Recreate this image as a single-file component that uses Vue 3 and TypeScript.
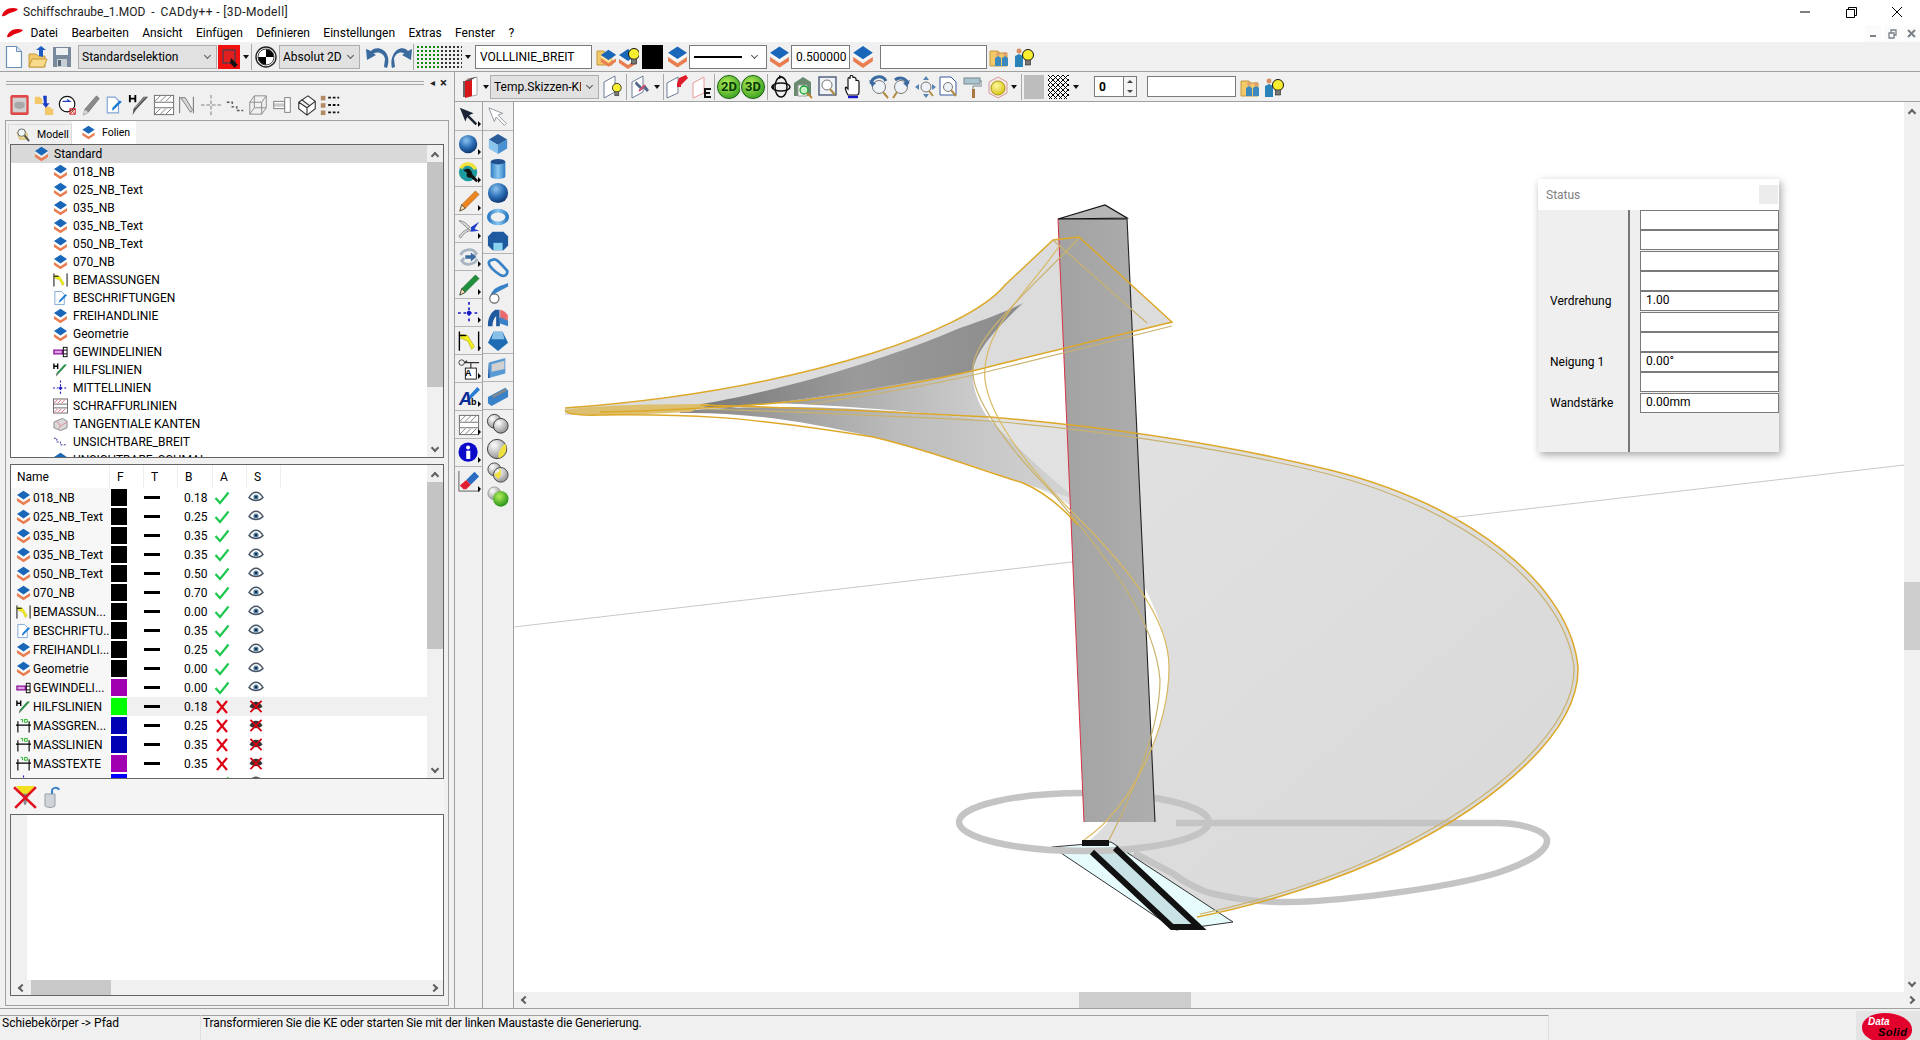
<script setup lang="ts">
type Item = { k: string; id?: string; w: number; m: number; t?: string };

const ic = (id: string, w: number, m: number): Item => ({ k: "ic", id, w, m });
const arrow = (m: number): Item => ({ k: "arrow", w: 7, m });
const sep = (m: number): Item => ({ k: "sep", w: 1, m });
const combo = (t: string, w: number, m: number): Item => ({ k: "combo", t, w, m });
const input = (t: string, w: number, m: number): Item => ({ k: "input", t, w, m });

const menu = ["Datei", "Bearbeiten", "Ansicht", "Einfügen", "Definieren", "Einstellungen", "Extras", "Fenster", "?"];

const bar1: Item[] = [
  ic("doc", 18, 5), ic("open", 20, 5), ic("save", 20, 4), combo("Standardselektion", 139, 6),
  ic("redbtn", 22, 1), arrow(3), sep(2), ic("cross", 22, 3), combo("Absolut 2D", 81, 2),
  ic("undo", 25, 5), ic("redo", 22, 1), sep(0), ic("grid", 45, 3), arrow(3),
  input("VOLLLINIE_BREIT", 117, 4), ic("flayer", 20, 4), ic("blayer", 20, 3), { k: "black", w: 21, m: 3 },
  ic("layer", 21, 4), { k: "line", w: 78, m: 1 }, ic("layer", 21, 2), input("0.500000", 59, 1),
  ic("layer", 22, 2), input("", 107, 6), ic("fperson", 21, 2), ic("pbulb", 21, 4),
];

const bar2: Item[] = [
  ic("prism", 18, 7), arrow(3), combo("Temp.Skizzen-KE", 109, 1), ic("planebulb", 20, 4), sep(3),
  ic("planetool", 20, 4), arrow(3), sep(3), ic("planered", 22, 2), ic("planee", 20, 4), sep(2),
  { k: "ball", t: "2D", w: 24, m: 2 }, { k: "ball", t: "3D", w: 24, m: 0 }, sep(2), ic("orbit", 20, 3), ic("house", 22, 2),
  ic("zoomwin", 20, 3), ic("hand", 18, 6), ic("zoomrev", 21, 6), ic("zoomfwd", 19, 3), ic("fit", 23, 3),
  ic("zoomdoc", 20, 2), ic("roller", 19, 4), ic("cube", 20, 6), arrow(3), sep(4),
  { k: "grey", w: 20, m: 2 }, ic("checker", 21, 4), arrow(4), input("0", 30, 15), { k: "spin", w: 13, m: 0 },
  input("", 89, 10), ic("fperson", 21, 4), ic("pbulb", 21, 3),
];

const leftTools: Item[] = [
  ic("redbox", 21, 9), ic("foldswap", 22, 3), ic("circ", 20, 3), ic("pencilgrey", 18, 4), ic("label", 18, 5),
  ic("helpgrey", 22, 5), ic("hatchgrey", 22, 3), ic("dimgrey", 17, 3), ic("centergrey", 22, 5),
  ic("hiddengrey", 20, 3), ic("wire", 20, 3), ic("bolt", 20, 4), ic("tanggrey", 20, 5), ic("listdots", 20, 3),
];

const tree: [string, string][] = [
  ["layer", "018_NB"], ["layer", "025_NB_Text"], ["layer", "035_NB"], ["layer", "035_NB_Text"],
  ["layer", "050_NB_Text"], ["layer", "070_NB"], ["dim", "BEMASSUNGEN"], ["label", "BESCHRIFTUNGEN"],
  ["layer", "FREIHANDLINIE"], ["layer", "Geometrie"], ["thread", "GEWINDELINIEN"], ["help", "HILFSLINIEN"],
  ["center", "MITTELLINIEN"], ["hatch", "SCHRAFFURLINIEN"], ["tang", "TANGENTIALE KANTEN"],
  ["hidden", "UNSICHTBARE_BREIT"], ["layer", "UNSICHTBARE_SCHMAL"],
];

const K = "#000";
const P = "#a000b0";
const D = "#0000b4";
const rows: { i: string; n: string; c: string; b: string; on: boolean }[] = [
  { i: "layer", n: "018_NB", c: K, b: "0.18", on: true },
  { i: "layer", n: "025_NB_Text", c: K, b: "0.25", on: true },
  { i: "layer", n: "035_NB", c: K, b: "0.35", on: true },
  { i: "layer", n: "035_NB_Text", c: K, b: "0.35", on: true },
  { i: "layer", n: "050_NB_Text", c: K, b: "0.50", on: true },
  { i: "layer", n: "070_NB", c: K, b: "0.70", on: true },
  { i: "dim", n: "BEMASSUN...", c: K, b: "0.00", on: true },
  { i: "label", n: "BESCHRIFTU...", c: K, b: "0.35", on: true },
  { i: "layer", n: "FREIHANDLI...", c: K, b: "0.25", on: true },
  { i: "layer", n: "Geometrie", c: K, b: "0.00", on: true },
  { i: "thread", n: "GEWINDELI...", c: P, b: "0.00", on: true },
  { i: "help", n: "HILFSLINIEN", c: "#00ff00", b: "0.18", on: false },
  { i: "mass", n: "MASSGREN...", c: D, b: "0.25", on: false },
  { i: "mass", n: "MASSLINIEN", c: D, b: "0.35", on: false },
  { i: "mass", n: "MASSTEXTE", c: P, b: "0.35", on: false },
  { i: "center", n: "MITTELLINIEN", c: "#0000ff", b: "0.18", on: true },
];

const vcol1 = ["v-arrow", "v-sphere", "v-wrench", "v-pencil", "v-pliers", "v-refresh", "v-green", "center", "dim", "v-text", "v-abc", "hatchgrey", "v-info", "v-eraser"];
const vcol2: { i: string; h: number; s?: boolean }[] = [
  { i: "v-arrow2", h: 28, s: true }, { i: "s-box", h: 26 }, { i: "s-cyl", h: 24 }, { i: "s-sph", h: 24 },
  { i: "s-torus", h: 24 }, { i: "s-cham", h: 25, s: true }, { i: "s-ring", h: 27 }, { i: "s-sweep", h: 24 },
  { i: "s-loft", h: 24 }, { i: "s-block", h: 25, s: true }, { i: "s-cut", h: 28, s: true }, { i: "s-slot", h: 28, s: true },
  { i: "b-union", h: 27 }, { i: "b-yellow", h: 24 }, { i: "b-inter", h: 24 }, { i: "b-green", h: 24 },
];

const statusRows = [
  { l: "", v: "" }, { l: "", v: "" }, { l: "", v: "", gap: true }, { l: "", v: "" }, { l: "Verdrehung", v: "1.00" },
  { l: "", v: "", gap: true }, { l: "", v: "" }, { l: "Neigung 1", v: "0.00°" }, { l: "", v: "" },
  { l: "Wandstärke", v: "0.00mm", gap: true },
];
</script>

<template>
  <svg class="defs" aria-hidden="true">
    <defs>
      <radialGradient id="gb" cx=".4" cy=".3" r=".75"><stop offset="0" stop-color="#8cc4f0" /><stop offset=".55" stop-color="#2a6cb4" /><stop offset="1" stop-color="#0c2f66" /></radialGradient>
      <linearGradient id="gc" x1="0" x2="1"><stop offset="0" stop-color="#2f7cc4" /><stop offset=".5" stop-color="#8cc8f0" /><stop offset="1" stop-color="#2f7cc4" /></linearGradient>
      <radialGradient id="gs" cx=".35" cy=".3" r=".8"><stop offset="0" stop-color="#fff" /><stop offset="1" stop-color="#888" /></radialGradient>
      <radialGradient id="gg" cx=".4" cy=".35" r=".7"><stop offset="0" stop-color="#b4f05a" /><stop offset="1" stop-color="#1e8c14" /></radialGradient>
      <radialGradient id="gy" cx=".4" cy=".35" r=".7"><stop offset="0" stop-color="#fff8a0" /><stop offset="1" stop-color="#d8c010" /></radialGradient>
      <pattern id="dg" width="4" height="4" patternUnits="userSpaceOnUse"><rect width="2" height="2" fill="#128a12" /></pattern>
      <pattern id="dk" width="4" height="4" patternUnits="userSpaceOnUse"><rect width="2" height="2" fill="#333" /></pattern>
      <pattern id="ch" width="5" height="5" patternUnits="userSpaceOnUse"><path d="M0 0l5 5M5 0L0 5" stroke="#000" /></pattern>
      <g id="layerinner"><path d="M1 7l9-6 9 6-9 6z" fill="#1a66b8" /><path d="M1 8l9 6 9-6v1l-9 6-9-6z" fill="#fff" /><path d="M1 11l9 6 9-6v4l-9 6-9-6z" fill="#ea7d50" /></g>
      <g id="bulbinner"><circle cx="6" cy="6" r="5.500" fill="#f8ee30" stroke="#111" /><rect x="3.500" y="11" width="5" height="5" fill="#777" stroke="#222" stroke-width=".6" /></g>
    </defs>

    <symbol id="layer" viewBox="0 0 20 22"><use href="#layerinner" /></symbol>
    <symbol id="dim" viewBox="0 0 16 16"><path d="M1 1v14M15 1v14" stroke="#000" /><path d="M2 3l5 1 5 8-2 2-3-6-5-2z" fill="#f2ee20" stroke="#a8a000" stroke-width=".4" /><path d="M1 4h5" stroke="#000" /></symbol>
    <symbol id="label" viewBox="0 0 16 16"><path d="M2 1h7l3 3v11H2z" fill="#fff" stroke="#7ea4d4" /><path d="M15 5l-7 7-2 1 1-3 6-6z" fill="#1c7cd4" /></symbol>
    <symbol id="thread" viewBox="0 0 16 16"><path d="M1 6h9v4H1z" fill="#e0a0e8" stroke="#8a1098" stroke-width="1.4" /><rect x="11" y="3" width="4" height="10" fill="#fff" stroke="#000" /><path d="M11 6h4M11 10h4" stroke="#000" /></symbol>
    <symbol id="help" viewBox="0 0 16 16"><path d="M1 1v6M5 1v6M1 4h4" stroke="#000" stroke-width="1.5" /><path d="M15 2l-9 10-3 3 1-4 8-9z" fill="#2f8f4c" /><path d="M3 15l1-4 2 1z" fill="#888" /></symbol>
    <symbol id="center" viewBox="0 0 16 16"><path d="M8 0v16M0 8h16" stroke="#1818c8" stroke-width="1.2" stroke-dasharray="2 2" /><circle cx="8" cy="8" r="1.6" fill="#1818c8" /></symbol>
    <symbol id="hatch" viewBox="0 0 16 16"><rect x=".5" y=".5" width="15" height="15" fill="#fff" stroke="#666" /><path d="M1 6h14M1 10h14" stroke="#666" /><path d="M1 5l4-4M5 5l4-4M9 5l4-4M1 15l4-4M5 15l4-4M9 15l4-4" stroke="#e0607c" /></symbol>
    <symbol id="tang" viewBox="0 0 16 16"><path d="M1 6l9-4 5 3v7l-7 3-7-3z" fill="#d8d8d8" stroke="#888" /><path d="M4 5l4 5-2 3M8 10l7-4" fill="none" stroke="#e08a90" /></symbol>
    <symbol id="hidden" viewBox="0 0 16 16"><path d="M1 4h3v4h4v3h7" fill="none" stroke="#20208a" stroke-dasharray="2 1.5" /></symbol>
    <symbol id="mass" viewBox="0 0 16 16"><path d="M2 3v12M14 3v12M0 7h16" stroke="#000" stroke-width="1.2" /><path d="M5 1h2v3M9 1h3v3H9z" fill="none" stroke="#22b020" /></symbol>

    <symbol id="doc" viewBox="0 0 18 24"><path d="M1.500 1.500h10l5 5v16h-15z" fill="#fff" stroke="#6a90b8" stroke-width="1.200" /><path d="M11.500 1.500v5h5" fill="#dde6f0" stroke="#6a90b8" /></symbol>
    <symbol id="open" viewBox="0 0 20 24"><path d="M1 9h7l2 2h7v11H1z" fill="#f2c868" stroke="#c49a40" /><path d="M1 22l3-8h15l-3 8z" fill="#f8dc8c" stroke="#c49a40" /><path d="M11 11V5H8l5-4 5 4h-3v7z" fill="#1c5cc4" /></symbol>
    <symbol id="save" viewBox="0 0 20 22"><path d="M1 1h18v20H1z" fill="#7a8a9c" /><rect x="4" y="2" width="12" height="7" fill="#eef0f2" /><rect x="5" y="13" width="10" height="8" fill="#c8ced6" /><rect x="6" y="14" width="3" height="6" fill="#5a6878" /></symbol>
    <symbol id="redbtn" viewBox="0 0 22 24"><rect width="22" height="24" fill="#f01010" /><rect x="5" y="5" width="12" height="13" fill="#e02020" stroke="#404050" stroke-width="1.200" /><path d="M13 13l7 7-2 1-1 2-5-5z" fill="#111" /></symbol>
    <symbol id="cross" viewBox="0 0 22 22"><circle cx="11" cy="11" r="10" fill="#fff" stroke="#222" stroke-width="1.400" /><path d="M11 3a8 8 0 018 8h-8zM11 19a8 8 0 01-8-8h8z" fill="#000" /><circle cx="11" cy="11" r="8" fill="none" stroke="#444" /></symbol>
    <symbol id="undo" viewBox="0 0 25 22"><path d="M1 3l1 11 9-5-2.500-1.500C13 5 19 7 20 13l-1 8 3 1c3-8 1-15-4-18C14 1 8 2 6 5z" fill="#3a6a9e" /></symbol>
    <symbol id="redo" viewBox="0 0 22 22"><path d="M21 3l-1 11-9-5 2.500-1.500C9 5 4 8 3 13l1 8-3 1C-1 14 2 7 6 4c4-3 9-2 11 1z" fill="#3a6a9e" /></symbol>
    <symbol id="grid" viewBox="0 0 45 22"><rect width="23" height="22" fill="url(#dg)" /><rect x="23" width="22" height="22" fill="url(#dk)" /></symbol>
    <symbol id="flayer" viewBox="0 0 20 24"><path d="M1 6h7l2 2h6v12H1z" fill="#f2c868" stroke="#c49a40" /><g transform="translate(4 4) scale(.85)"><use href="#layerinner" /></g></symbol>
    <symbol id="blayer" viewBox="0 0 20 24"><g transform="translate(-1 3)"><use href="#layerinner" /></g><g transform="translate(9 3)"><use href="#bulbinner" /></g></symbol>
    <symbol id="fperson" viewBox="0 0 21 24"><path d="M1 6h8l2 2h7v13H1z" fill="#f2c868" stroke="#c49a40" /><path d="M6 21v-8l3-2 3 2v8zM13 21v-8l3-2 3 2v8z" fill="#3a8ac0" /><circle cx="9" cy="9" r="2" fill="#e0a070" /><circle cx="16" cy="9" r="2" fill="#e0a070" /></symbol>
    <symbol id="pbulb" viewBox="0 0 21 24"><path d="M1 22v-11l4-2 4 2v11z" fill="#2a82b8" /><circle cx="5" cy="6" r="2.500" fill="#d89060" /><g transform="translate(8 4)"><use href="#bulbinner" /></g></symbol>
    <symbol id="prism" viewBox="0 0 18 24"><path d="M5 4l10-2v18L5 22z" fill="#fff" stroke="#aaa" /><path d="M3 6l7-3v18l-7 2z" fill="#d81818" /><path d="M3 6l7-3 5-1-6 3-1 1z" fill="#555" /><path d="M1 6h2v16H1z" fill="#666" /></symbol>
    <symbol id="planebulb" viewBox="0 0 20 24"><path d="M1 7l11-6v16L1 23z" fill="#fff" stroke="#6f7f98" /><g transform="translate(9 8) scale(.8)"><use href="#bulbinner" /></g></symbol>
    <symbol id="planetool" viewBox="0 0 20 24"><path d="M1 7l11-6v16L1 23z" fill="#fff" stroke="#6f7f98" /><path d="M5 6l6 6 3-2 4 5-2 2-4-4-2 2-6-6z" fill="#506888" /><path d="M8 16l6-6" stroke="#d05070" stroke-width="2" /></symbol>
    <symbol id="planered" viewBox="0 0 22 24"><path d="M1 8l11-6v16L1 23z" fill="#fff" stroke="#6f7f98" /><path d="M13 3l7-3 2 3-8 8-3-2z" fill="#e01c2a" /><rect x="11" y="9" width="4" height="3" fill="#e01c2a" /></symbol>
    <symbol id="planee" viewBox="0 0 20 24"><path d="M1 8l11-6v16L1 23z" fill="#fff" stroke="#e89a9a" /><path d="M12 13h7v2h-5v2h4v2h-4v2h5v2h-7z" fill="#111" /></symbol>
    <symbol id="orbit" viewBox="0 0 20 24"><ellipse cx="10" cy="12" rx="6" ry="10" fill="none" stroke="#111" stroke-width="1.500" /><ellipse cx="10" cy="12" rx="9" ry="4" fill="none" stroke="#111" stroke-width="1.500" /><path d="M0 12l3-3v6zM8 0l4 2-4 2z" fill="#111" /></symbol>
    <symbol id="house" viewBox="0 0 22 24"><path d="M1 8l9-6 8 5v14H1z" fill="#6a8a70" /><path d="M5 10h9v11H5z" fill="#fff" stroke="#999" /><circle cx="11" cy="15" r="4" fill="#c8f0c8" stroke="#18a030" stroke-width="1.300" /><path d="M14 18l5 5" stroke="#c08a30" stroke-width="2" /></symbol>
    <symbol id="zoomwin" viewBox="0 0 20 24"><rect x="1" y="2" width="17" height="18" fill="#eef2f6" stroke="#4a5a78" stroke-width="1.400" /><circle cx="9" cy="10" r="5" fill="#fff" stroke="#777" /><path d="M12 14l5 6" stroke="#b08a40" stroke-width="2" /></symbol>
    <symbol id="hand" viewBox="0 0 18 24"><path d="M4 20C1 15 1 12 2 12l2 2V4c0-2 2-2 2 0V2c0-2 3-2 3 0v1c0-1 3-1 3 1v2c0-1 3-1 3 1v9c0 3-1 4-2 4z" fill="#fff" stroke="#111" stroke-width="1.200" /><path d="M4 22h10" stroke="#1414c8" stroke-width="2.400" /></symbol>
    <symbol id="zoomrev" viewBox="0 0 21 24"><circle cx="11" cy="12" r="6.500" fill="#eef2f6" stroke="#777" /><path d="M3 9a8 8 0 0115-3" fill="none" stroke="#3a6a9e" stroke-width="3" /><path d="M1 5l3 7 4-4z" fill="#3a6a9e" /><path d="M15 17l5 6" stroke="#b08a40" stroke-width="2" /></symbol>
    <symbol id="zoomfwd" viewBox="0 0 19 24"><circle cx="9" cy="12" r="6.500" fill="#eef2f6" stroke="#777" /><path d="M16 9A8 8 0 003 5" fill="none" stroke="#3a6a9e" stroke-width="3" /><path d="M18 5l-3 7-4-4z" fill="#3a6a9e" /><path d="M5 17l-4 6" stroke="#b08a40" stroke-width="2" /></symbol>
    <symbol id="fit" viewBox="0 0 23 24"><circle cx="12" cy="12" r="5" fill="#eef2f6" stroke="#777" /><path d="M12 1l3 4H9zM12 23l3-4H9zM1 12l4-3v6zM22 12l-4-3v6z" fill="#5a84b4" /><path d="M15 16l4 5" stroke="#b08a40" stroke-width="2" /></symbol>
    <symbol id="zoomdoc" viewBox="0 0 20 24"><path d="M1 2h11l5 5v13H1z" fill="#fff" stroke="#3a5a9e" /><circle cx="9" cy="12" r="4.500" fill="#eef2f6" stroke="#777" /><path d="M12 15l5 6" stroke="#b08a40" stroke-width="2" /></symbol>
    <symbol id="roller" viewBox="0 0 19 24"><rect x="1" y="3" width="16" height="6" fill="#a8c4cc" stroke="#788890" /><path d="M17 6h2v5h-9v4" fill="none" stroke="#788890" /><rect x="9" y="14" width="3" height="9" fill="#a87840" /></symbol>
    <symbol id="cube" viewBox="0 0 20 24"><path d="M10 2l9 5v11l-9 5-9-5V7z" fill="#f6e8e4" stroke="#d49a9a" /><circle cx="10" cy="13" r="7" fill="url(#gy)" stroke="#a89a10" /></symbol>
    <symbol id="checker" viewBox="0 0 21 24"><rect width="21" height="24" fill="#fff" /><rect width="21" height="24" fill="url(#ch)" /></symbol>
    <symbol id="redbox" viewBox="0 0 21 24"><rect x=".5" y="1" width="20" height="22" rx="2" fill="#e04848" /><rect x="3" y="4" width="15" height="16" fill="#d0d0d0" /><path d="M5 10c2-2 9-2 11 0v4c-2 3-9 3-11 0z" fill="#a8a8a8" /></symbol>
    <symbol id="foldswap" viewBox="0 0 22 24"><path d="M1 3h5l2 2h1v6H1z" fill="#f2c868" /><path d="M12 14h5l2 2h2v7h-9z" fill="#f2c868" /><path d="M10 2h4v8h3l-4 5-4-5h2z" fill="#1c3cc4" /></symbol>
    <symbol id="circ" viewBox="0 0 20 24"><circle cx="9" cy="11" r="8.500" fill="#fff" stroke="#111" stroke-width="1.300" /><path d="M4 8h8l-3-2M12 8" fill="none" stroke="#1c3cc4" stroke-width="1.200" /><path d="M12 16h6v6h-6zM12 22l6-6M12 16l6 6" fill="none" stroke="#d02020" /></symbol>
    <symbol id="pencilgrey" viewBox="0 0 18 24"><path d="M15 2l3 3L6 20l-5 3 1-6z" fill="#8a8a8a" stroke="#555" stroke-width=".6" /><path d="M2 17l4 3-5 3z" fill="#d8d8d8" /></symbol>
    <symbol id="helpgrey" viewBox="0 0 22 24"><path d="M1 1v8M7 1v8M1 5h6" stroke="#000" stroke-width="2" /><path d="M21 3L8 17l-4 6 1-7L16 3z" fill="#555" /><path d="M18 3L7 15" stroke="#aaa" /></symbol>
    <symbol id="hatchgrey" viewBox="0 0 22 24"><rect x=".5" y="1.500" width="21" height="21" fill="#fff" stroke="#666" /><path d="M1 9h20M1 15h20" stroke="#666" /><path d="M1 8l6-6M7 8l6-6M13 8l6-6M1 22l6-6M7 22l6-6M13 22l6-6" stroke="#777" /></symbol>
    <symbol id="dimgrey" viewBox="0 0 17 24"><path d="M1 3v18M16 3v18" stroke="#666" /><path d="M2 4l5 0 8 13-2 3-6-9z" fill="#d8d8d8" stroke="#777" /></symbol>
    <symbol id="centergrey" viewBox="0 0 22 24"><path d="M11 1v22M0 12h22" stroke="#777" stroke-dasharray="4 2" /></symbol>
    <symbol id="hiddengrey" viewBox="0 0 20 24"><path d="M1 9h6v5h5v4h7" fill="none" stroke="#555" stroke-width="1.500" stroke-dasharray="3 2" /></symbol>
    <symbol id="wire" viewBox="0 0 20 24"><path d="M1 9h13v13H1zM6 2h13v13H6zM1 9l5-7M14 9l5-7M14 22l5-7M1 22l5-7" fill="none" stroke="#888" /></symbol>
    <symbol id="bolt" viewBox="0 0 20 24"><rect x="1" y="8" width="12" height="8" fill="#fff" stroke="#777" /><path d="M1 11h12M1 13h12" stroke="#999" /><rect x="13" y="4" width="6" height="16" fill="#fff" stroke="#777" /></symbol>
    <symbol id="tanggrey" viewBox="0 0 20 24"><path d="M1 9l10-7 8 6v8l-9 7-9-7zM1 9l9 6 9-7M10 15v8M4 6l9 7" fill="#fff" stroke="#333" stroke-width="1.200" /></symbol>
    <symbol id="listdots" viewBox="0 0 20 24"><rect x="0" y="2" width="5" height="5" fill="#b08a60" /><rect x="0" y="10" width="5" height="5" fill="#b08a60" /><rect x="0" y="18" width="5" height="5" fill="#b08a60" /><path d="M8 4h12M8 12h12M8 20h12" stroke="#111" stroke-width="2" stroke-dasharray="3 2" /></symbol>
    <symbol id="modeltab" viewBox="0 0 16 16"><path d="M1 6l3-3h5l3 5v5H4z" fill="#f2dc88" stroke="#b09838" stroke-width=".6" /><circle cx="6" cy="6" r="4" fill="#eef6f8" stroke="#666" /><path d="M9 9l5 6" stroke="#555" stroke-width="2" /></symbol>
    <symbol id="lampx" viewBox="0 0 22 22"><path d="M3 1h17l-6 8H8z" fill="#f2e020" /><path d="M9 8h5l-2 10H10z" fill="#808890" /><path d="M1 2l20 19M21 2L2 21" stroke="#e01020" stroke-width="2.400" /></symbol>
    <symbol id="bucket" viewBox="0 0 16 22"><path d="M1 8h10v12c-3 2-7 2-10 0z" fill="#d0d4d8" stroke="#98a0a8" /><path d="M8 8V5c0-4 6-4 7-1" fill="none" stroke="#3a82c8" stroke-width="2" /></symbol>
    <symbol id="check" viewBox="0 0 16 14"><path d="M1.500 7l4.500 5L14.500 1.500" fill="none" stroke="#1ec850" stroke-width="2.200" /></symbol>
    <symbol id="nope" viewBox="0 0 16 14"><path d="M3 1l10 12M13 1L3 13" stroke="#e00014" stroke-width="2.200" /></symbol>
    <symbol id="eye" viewBox="0 0 16 12"><path d="M1 6c4-7 10-7 14 0-4 4-10 4-14 0z" fill="#fff" stroke="#4a5664" stroke-width="1.500" /><circle cx="8" cy="5.500" r="2.600" fill="#4a7ea8" /><circle cx="8" cy="5.500" r="1" fill="#111" /></symbol>
    <symbol id="eyeoff" viewBox="0 0 16 14"><g transform="translate(0 1)"><path d="M1 6c4-7 10-7 14 0-4 4-10 4-14 0z" fill="#333" /></g><path d="M2 1l12 12M14 1L2 13" stroke="#d80010" stroke-width="2" /></symbol>

    <symbol id="v-arrow" viewBox="0 0 24 24"><path d="M2 2l15 6-5 2 9 9-2 2-9-9-2 5z" fill="#1c2438" /></symbol>
    <symbol id="v-arrow2" viewBox="0 0 24 24"><path d="M2 2l15 6-5 2 9 9-2 2-9-9-2 5z" fill="#fff" stroke="#8a9098" /></symbol>
    <symbol id="v-sphere" viewBox="0 0 24 24"><circle cx="11" cy="11" r="10" fill="url(#gb)" /></symbol>
    <symbol id="v-wrench" viewBox="0 0 24 24"><circle cx="11" cy="11" r="10" fill="#1c9aa0" /><path d="M3 7C7 0 16 1 19 8" fill="none" stroke="#f0e040" stroke-width="4" /><path d="M6 9c5-3 8-2 10 5l6 6-2 2-6-5c-3 1-6-2-4-5z" fill="#111" /></symbol>
    <symbol id="v-pencil" viewBox="0 0 24 24"><path d="M19 1l4 4L8 20l-6 3 2-7z" fill="#ec8420" stroke="#a05a10" stroke-width=".6" /><path d="M4 16l4 4-6 3z" fill="#f4dcb0" stroke="#111" stroke-width=".6" /></symbol>
    <symbol id="v-pliers" viewBox="0 0 24 24"><path d="M1 3c6 0 9 4 12 7l-2 2C8 9 5 6 1 3zM1 20c4-5 8-8 11-8l2 2c-4 0-8 3-11 8z" fill="#d8d8d8" stroke="#888" /><path d="M14 10l9-6-5 8 5 2-9 1z" fill="#2040c8" /></symbol>
    <symbol id="v-refresh" viewBox="0 0 24 24"><path d="M3 10C5 3 16 2 20 8l-3 3" fill="none" stroke="#a8b4c0" stroke-width="3" /><path d="M21 14c-3 7-13 8-17 2l3-3" fill="none" stroke="#a8b4c0" stroke-width="3" /><path d="M8 10h6V7l6 5-6 5v-3H8z" fill="#3a6a9e" /></symbol>
    <symbol id="v-green" viewBox="0 0 24 24"><path d="M19 1l4 4L8 20l-6 3 2-7z" fill="#1f8f3c" stroke="#0c5c20" stroke-width=".6" /><path d="M4 16l4 4-6 3z" fill="#f4dcb0" stroke="#111" stroke-width=".6" /></symbol>
    <symbol id="v-text" viewBox="0 0 24 24"><circle cx="4" cy="5" r="3" fill="none" stroke="#333" /><path d="M7 5h16M7 5l3-2M14 5v6" stroke="#333" stroke-width="1.300" fill="none" /><rect x="8" y="11" width="12" height="12" fill="#fff" stroke="#111" /></symbol>
    <symbol id="v-abc" viewBox="0 0 24 24"><path d="M21 1l3 3L13 15l-3 1 1-4z" fill="#2a7cd4" /></symbol>
    <symbol id="v-info" viewBox="0 0 24 24"><circle cx="11" cy="11" r="10.500" fill="#0a0ac8" /><circle cx="11" cy="6" r="2.200" fill="#fff" /><rect x="9" y="9.500" width="4.400" height="9" fill="#fff" /></symbol>
    <symbol id="v-eraser" viewBox="0 0 24 24"><path d="M1 1v22h23" fill="none" stroke="#555" /><path d="M18 2l5 5-9 9-5-5z" fill="#2a6cc4" /><path d="M9 11l5 5-5 5H6l-4-4z" fill="#e02030" /></symbol>
    <symbol id="s-box" viewBox="0 0 24 24"><path d="M2 7l10-6 10 6-10 6z" fill="#2a5c9a" /><path d="M2 7l10 6v10L2 17z" fill="#88c4ec" /><path d="M22 7l-10 6v10l10-6z" fill="#4a90d0" /></symbol>
    <symbol id="s-cyl" viewBox="0 0 24 24"><path d="M4 4v16c0 4 16 4 16 0V4z" fill="url(#gc)" /><ellipse cx="12" cy="4" rx="8" ry="3" fill="#1f4f8c" /></symbol>
    <symbol id="s-sph" viewBox="0 0 24 24"><circle cx="12" cy="12" r="11" fill="url(#gb)" /></symbol>
    <symbol id="s-torus" viewBox="0 0 24 24"><ellipse cx="12" cy="12" rx="10" ry="7" fill="none" stroke="url(#gc)" stroke-width="4" /></symbol>
    <symbol id="s-cham" viewBox="0 0 24 24"><path d="M6 2h12l5 5v10l-5 5H6l-5-5V7z" fill="#1f5aa0" /><rect x="7" y="14" width="10" height="8" fill="#88d4f0" /></symbol>
    <symbol id="s-ring" viewBox="0 0 24 24"><path d="M6 3c4-2 8 3 16 12 1 4-3 7-7 5C8 16 2 10 2 6c0-1 2-3 4-3z" fill="none" stroke="#3a82c8" stroke-width="3" /></symbol>
    <symbol id="s-sweep" viewBox="0 0 24 24"><path d="M23 1C16 4 10 5 7 9c-3 3-4 7-3 9l4-4c2-3 8-5 15-9z" fill="#3a82c8" /><circle cx="8" cy="18" r="5" fill="#fff" stroke="#666" stroke-width="1.300" /></symbol>
    <symbol id="s-loft" viewBox="0 0 24 24"><path d="M1 22c0-8 2-14 8-18l5 0v18h-4V11c-3 3-4 7-4 11z" fill="#1f5aa0" /><path d="M14 4c4 0 7 3 9 6v7l-9-4z" fill="#e86a70" stroke="#fff" stroke-width=".5" /><path d="M14 12l9 4v6l-9-3z" fill="#3a82c8" /></symbol>
    <symbol id="s-block" viewBox="0 0 24 24"><path d="M7 2h10l6 12-11 9L1 14z" fill="#1f6cb4" /><path d="M7 2h10l2 8H5z" fill="#88c0e8" /></symbol>
    <symbol id="s-cut" viewBox="0 0 24 24"><path d="M2 6l18-5v17L2 23z" fill="#5a9ad4" /><path d="M5 8l14-4v9L5 16z" fill="#d0d0d0" /><path d="M2 6l-1 17h2z" fill="#1f5aa0" /></symbol>
    <symbol id="s-slot" viewBox="0 0 24 24"><path d="M1 13l19-10 3 3v7L5 23l-4-3z" fill="#3a82c8" /><path d="M5 12l15-8 2 2-15 8z" fill="#888" /></symbol>
    <symbol id="b-union" viewBox="0 0 24 24"><circle cx="8" cy="9" r="7.500" fill="url(#gs)" stroke="#333" /><circle cx="15" cy="14" r="8" fill="url(#gs)" stroke="#333" /></symbol>
    <symbol id="b-yellow" viewBox="0 0 24 24"><circle cx="11" cy="12" r="10.500" fill="url(#gs)" stroke="#333" /><path d="M20 6c3 6 0 14-7 16-2-4 2-12 7-16z" fill="#f0e040" /></symbol>
    <symbol id="b-inter" viewBox="0 0 24 24"><circle cx="8" cy="8" r="7" fill="url(#gs)" stroke="#444" /><circle cx="15" cy="14" r="8" fill="url(#gs)" stroke="#444" /><path d="M14 6c1 3-2 6-6 7 1 3 3 5 5 5 3-3 3-9 1-12z" fill="#f0e040" /></symbol>
    <symbol id="b-green" viewBox="0 0 24 24"><circle cx="8" cy="8" r="7" fill="url(#gs)" stroke="#999" /><circle cx="15" cy="14" r="8.500" fill="url(#gg)" /></symbol>
  </svg>

  <div class="app">
    <header class="title">
      <svg class="applogo" viewBox="0 0 16 10"><path d="M0 9C1 3 8-1 16 2c-2 3-6 3-8 4-3 1-5 4-8 3z" fill="#e2000f" /></svg>
      <span class="ttext">Schiffschraube_1.MOD&nbsp; -&nbsp; <span class="twide">CADdy++ - [3D-Modell]</span></span>
      <svg class="wbtn" viewBox="0 0 46 20"><path d="M18 10h10" stroke="#000" /></svg>
      <svg class="wbtn" viewBox="0 0 46 20"><path d="M18.500 7.500h8v8h-8zM20.500 7.500v-2h8v8h-2" fill="none" stroke="#000" /></svg>
      <svg class="wbtn" viewBox="0 0 46 20"><path d="M18 5l10 10M28 5L18 15" stroke="#000" /></svg>
    </header>

    <nav class="menu">
      <svg class="applogo menulogo" viewBox="0 0 16 10"><path d="M0 9C1 3 8-1 16 2c-2 3-6 3-8 4-3 1-5 4-8 3z" fill="#e2000f" /></svg>
      <span v-for="m in menu" :key="m" class="mitem">{{ m }}</span>
      <span class="mdi">
        <svg viewBox="0 0 17 17"><rect width="17" height="17" fill="#fbfbfb" /><path d="M5 11h6" stroke="#7a8088" stroke-width="2" /></svg>
        <svg viewBox="0 0 17 17"><rect width="17" height="17" fill="#fbfbfb" /><path d="M5 8h5v5H5zM7 8V5h5v5h-2" fill="none" stroke="#7a8088" stroke-width="1.300" /></svg>
        <svg viewBox="0 0 17 17"><rect width="17" height="17" fill="#fbfbfb" /><path d="M5 5l7 7M12 5l-7 7" stroke="#7a8088" stroke-width="2" /></svg>
      </span>
    </nav>

    <div class="bar bar1">
      <template v-for="(it, i) in bar1" :key="i">
        <svg v-if="it.k === 'ic'" class="tic" :style="{ width: it.w + 'px', marginLeft: it.m + 'px' }"><use :href="'#' + it.id" /></svg>
        <span v-else-if="it.k === 'arrow'" class="arrow" :style="{ marginLeft: it.m + 'px' }"></span>
        <span v-else-if="it.k === 'sep'" class="sep" :style="{ marginLeft: it.m + 'px' }"></span>
        <span v-else-if="it.k === 'combo'" class="combo" :style="{ width: it.w + 'px', marginLeft: it.m + 'px' }"><span class="ctext">{{ it.t }}</span><i class="chev"></i></span>
        <span v-else-if="it.k === 'input'" class="inp" :style="{ width: it.w + 'px', marginLeft: it.m + 'px' }">{{ it.t }}</span>
        <span v-else-if="it.k === 'black'" class="blackbox" :style="{ width: it.w + 'px', marginLeft: it.m + 'px' }"></span>
        <span v-else-if="it.k === 'line'" class="inp linecombo" :style="{ width: it.w + 'px', marginLeft: it.m + 'px' }"><b></b><i class="chev"></i></span>
      </template>
    </div>

    <div class="body">
      <aside class="left">
        <div class="handle"><span class="grip"></span><span class="hbtn">◂</span><span class="hbtn hx">×</span></div>
        <div class="ltools">
          <svg v-for="(it, i) in leftTools" :key="i" class="lic" :style="{ width: it.w + 'px', marginLeft: it.m + 'px' }"><use :href="'#' + it.id" /></svg>
        </div>

        <div class="dock">
          <div class="tabs">
            <div class="tab off"><svg class="tabic"><use href="#modeltab" /></svg>Modell</div>
            <div class="tab on"><svg class="tabic"><use href="#layer" /></svg>Folien</div>
          </div>

          <section class="box tree">
            <div class="tlist">
              <div class="tnode root"><svg class="nic"><use href="#layer" /></svg>Standard</div>
              <div v-for="n in tree" :key="n[1]" class="tnode"><svg class="nic"><use :href="'#' + n[0]" /></svg>{{ n[1] }}</div>
            </div>
            <div class="vs">
              <i class="up"></i><span class="tthumb"></span><i class="down"></i>
            </div>
          </section>

          <section class="box table">
            <div class="tlist">
              <div class="lhead">
                <span>Name</span><span>F</span><span>T</span><span>B</span><span>A</span><span>S</span>
              </div>
              <div v-for="r in rows" :key="r.n" class="lrow" :class="{ hot: r.n === 'HILFSLINIEN' }">
                <span class="lname"><svg class="nic"><use :href="'#' + r.i" /></svg>{{ r.n }}</span>
                <span class="sw" :style="{ background: r.c }"></span>
                <span class="lt"><b></b></span>
                <span class="lb">{{ r.b }}</span>
                <svg class="la"><use :href="r.on ? '#check' : '#nope'" /></svg>
                <svg class="ls"><use :href="r.on ? '#eye' : '#eyeoff'" /></svg>
              </div>
            </div>
            <div class="vs">
              <i class="up"></i><span class="lthumb"></span><i class="down"></i>
            </div>
          </section>

          <div class="dtools">
            <svg class="dlamp"><use href="#lampx" /></svg>
            <svg class="dbucket"><use href="#bucket" /></svg>
          </div>

          <section class="box notes">
            <div class="nbody"><span class="gutter"></span></div>
            <div class="hs"><i class="lf"></i><span class="nthumb"></span><i class="rt"></i></div>
          </section>
        </div>
      </aside>

      <main class="right">
        <div class="bar bar2">
          <template v-for="(it, i) in bar2" :key="i">
            <svg v-if="it.k === 'ic'" class="tic" :style="{ width: it.w + 'px', marginLeft: it.m + 'px' }"><use :href="'#' + it.id" /></svg>
            <span v-else-if="it.k === 'arrow'" class="arrow" :style="{ marginLeft: it.m + 'px' }"></span>
            <span v-else-if="it.k === 'sep'" class="sep" :style="{ marginLeft: it.m + 'px' }"></span>
            <span v-else-if="it.k === 'combo'" class="combo" :style="{ width: it.w + 'px', marginLeft: it.m + 'px' }"><span class="ctext">{{ it.t }}</span><i class="chev"></i></span>
            <span v-else-if="it.k === 'ball'" class="ball" :style="{ width: it.w + 'px', marginLeft: it.m + 'px' }"><b>{{ it.t }}</b></span>
            <span v-else-if="it.k === 'input'" class="inp inp2" :class="{ zero: it.t === '0' }" :style="{ width: it.w + 'px', marginLeft: it.m + 'px' }">{{ it.t }}</span>
            <span v-else-if="it.k === 'grey'" class="greybox" :style="{ width: it.w + 'px', marginLeft: it.m + 'px' }"></span>
            <span v-else-if="it.k === 'spin'" class="spin"><i></i><i></i></span>
          </template>
        </div>

        <div class="work">
          <div class="vtool">
            <div class="vcol col1">
              <div v-for="v in vcol1" :key="v" class="vb fly">
                <svg><use :href="'#' + v" /></svg>
                <span v-if="v === 'v-text'" class="va">A</span>
                <template v-if="v === 'v-abc'"><span class="vabc">A</span><span class="vb-b">b</span></template>
              </div>
            </div>
            <div class="vcol col2">
              <div v-for="v in vcol2" :key="v.i" class="vb2" :class="{ lined: v.s }" :style="{ height: v.h + 'px' }"><svg><use :href="'#' + v.i" /></svg></div>
            </div>
          </div>

          <div class="view">
            <div class="viewrow">
              <div class="canvas">
                <svg class="scene" viewBox="514 102 1390 890">
                  <defs>
                    <linearGradient id="sailg" x1="0" x2="1" y1="0" y2="1"><stop offset="0" stop-color="#e2e2e2" /><stop offset="1" stop-color="#d8d8d8" /></linearGradient>
                    <linearGradient id="darkg" x1="0" x2="1"><stop offset="0" stop-color="#777" /><stop offset=".5" stop-color="#9a9a9a" /><stop offset="1" stop-color="#8c8c8c" /></linearGradient>
                    <linearGradient id="lowg" x1="0" x2="1"><stop offset="0" stop-color="#858585" /><stop offset=".55" stop-color="#bcbcbc" /><stop offset="1" stop-color="#d4d4d4" /></linearGradient>
                    <linearGradient id="midg" x1="0" x2="1"><stop offset="0" stop-color="#9a9a9a" /><stop offset="1" stop-color="#cfcfcf" /></linearGradient>
                    <linearGradient id="colg" x1="0" x2="1"><stop offset="0" stop-color="#a2a2a2" /><stop offset="1" stop-color="#aeaeae" /></linearGradient>
                  </defs>

                  <path d="M514 627L1904 465" stroke="#c8c8c8" fill="none" />

                  <!-- blade -->
                  <path d="M990 417C1120 428 1240 448 1330 470C1470 505 1570 585 1578 667C1580 730 1500 800 1400 850C1340 880 1260 905 1197 917L1173 893C1150 880 1120 860 1100 848L1084 845C1130 810 1169 730 1169 667C1165 600 1110 510 1023 483Z" fill="url(#sailg)" />
                  <path d="M565 408C650 402 760 388 873 353C930 335 985 310 1005 285L1053 240L1079 237L1172 322L1000 364C960 375 900 387 807 400C740 408 660 412 565 415Z" fill="#dcdcdc" />
                  <path d="M690 406C770 394 880 362 960 328C990 318 1010 310 1023 303C1000 325 975 350 973 372C900 385 820 398 730 408Z" fill="url(#darkg)" />
                  <path d="M773 403C840 395 920 380 973 372C972 390 980 408 990 420C920 412 840 405 773 403Z" fill="url(#midg)" />
                  <path d="M680 411C780 402 900 410 990 420C1010 440 1040 470 1078 500L1023 483C960 460 900 445 873 437C800 420 740 412 680 413Z" fill="url(#lowg)" />
                  <path d="M565 410C590 405 660 404 710 404L690 412C650 414 600 416 575 415Q565 414 565 410Z" fill="#dcc070" />

                  <!-- profile plane -->
                  <path d="M1052 847L1111 842L1233 922L1176 930Z" fill="#e6fbfc" stroke="#000" stroke-width=".8" />
                  <path d="M1092 852L1115 848L1197 923L1172 927Z" fill="#c8e2e6" />

                  <!-- rings -->
                  <ellipse cx="1084" cy="822" rx="125" ry="29" fill="none" stroke="#c4c4c4" stroke-width="6.500" />
                  <path d="M1134 853L1172 873C1190 886 1200 890 1210 893C1240 900 1260 902 1287 902C1330 902 1440 890 1497 873C1530 862 1548 850 1547 840C1546 830 1520 823 1497 823L1176 823" fill="none" stroke="#c4c4c4" stroke-width="6.500" />

                  <!-- column -->
                  <path d="M1058 219L1105 205L1127 218Z" fill="#b6b6b6" stroke="#111" stroke-width="1.200" />
                  <path d="M1058 219H1127L1155 822H1084Z" fill="url(#colg)" />
                  <path d="M1127 218L1155 822" stroke="#222" stroke-width="1.100" />
                  <path d="M1058 219L1084 822" stroke="#d83048" />
                  <path d="M1058 219H1127" stroke="#111" stroke-width="1.200" />

                  <!-- gold edges -->
                  <g fill="none" stroke="#dda828" stroke-width="1.500">
                    <path d="M565 408C650 402 760 388 873 353C930 335 985 310 1005 285L1053 240L1079 237L1172 322L1000 364C960 375 900 387 807 400C760 405 680 410 600 412" />
                    <path d="M565 410Q568 416 600 415C680 414 740 415 873 437C930 450 980 470 1023 483C1040 490 1060 505 1078 525" />
                    <path d="M700 405C800 408 890 412 990 417C1120 428 1240 448 1330 470C1470 505 1570 585 1578 667C1580 730 1500 800 1400 850C1340 880 1260 905 1197 917" />
                  </g>
                  <g fill="none" stroke="#c9b26e" stroke-width="1.200">
                    <path d="M1172 326L1002 368C960 379 900 391 810 404" />
                    <path d="M705 409C800 412 890 416 990 421C1120 432 1240 452 1328 474C1466 509 1565 589 1574 667C1576 728 1496 798 1396 848C1336 878 1258 902 1200 914" />
                    <path d="M1053 240L1147 323" />
                    <path d="M1079 238C1020 300 970 340 973 372C973 395 1000 440 1050 490C1110 560 1155 620 1160 680C1160 730 1130 800 1109 840" />
                    <path d="M1060 245C1030 290 980 330 985 380C990 420 1030 470 1080 520C1130 570 1169 620 1169 667C1169 730 1130 810 1084 840" stroke="#d8b860" />
                  </g>

                  <!-- profile section -->
                  <g stroke="#111" stroke-width="6" fill="none">
                    <path d="M1082 843H1109" />
                    <path d="M1092 852L1172 927H1199L1115 848" />
                  </g>
                </svg>

                <div class="status">
                  <div class="shead"><span>Status</span><i></i></div>
                  <div class="sbody">
                    <div class="slabels">
                      <div v-for="(r, i) in statusRows" :key="i" class="sl" :class="{ g: r.gap }">{{ r.l }}</div>
                    </div>
                    <div class="svals">
                      <div v-for="(r, i) in statusRows" :key="i" class="sv" :class="{ g: r.gap }">{{ r.v }}</div>
                    </div>
                  </div>
                </div>
              </div>
              <div class="vs main-vs"><i class="up"></i><span class="mthumb"></span><i class="down"></i></div>
            </div>
            <div class="hs main-hs"><i class="lf"></i><span class="mhthumb"></span><i class="rt"></i></div>
          </div>
        </div>
      </main>
    </div>

    <footer class="sbar">
      <span class="p1">Schiebekörper -&gt; Pfad</span>
      <span class="p2">Transformieren Sie die KE oder starten Sie mit der linken Maustaste die Generierung.</span>
      <span class="p3"></span>
      <span class="dslogo">
        <span class="blob"></span>
        <b class="d1">Data</b>
        <b class="d2">Solid</b>
      </span>
    </footer>
  </div>
</template>

<style>
html,
body {
  margin: 0;
  background: #fff;
}
</style>

<style scoped>
.defs {
  display: block;
  width: 0;
  height: 0;
  overflow: hidden;
}

.app {
  width: 1920px;
  height: 1040px;
  display: flex;
  flex-direction: column;
  overflow: hidden;
  background: #f0f0f0;
  color: #000;
  font-family: Roboto, "Liberation Sans", sans-serif;
  font-size: 12px;
}

.title {
  height: 24px;
  flex: none;
  display: flex;
  align-items: center;
  background: #fff;
  padding-left: 2px;
}

.applogo {
  width: 16px;
  height: 10px;
  flex: none;
}

.ttext {
  margin-left: 5px;
  flex: 1;
  color: #222;
}

.twide {
  letter-spacing: 0.38px;
}

.wbtn {
  width: 46px;
  height: 20px;
  flex: none;
}

.menu {
  height: 18px;
  flex: none;
  display: flex;
  align-items: center;
  gap: 13.4px;
  background: #fff;
  padding-left: 7px;
}

.menulogo {
  margin-right: -6px;
}

.mdi {
  margin-left: auto;
  display: flex;
  gap: 2px;
}

.mdi svg {
  width: 17px;
  height: 17px;
}

.bar {
  display: flex;
  align-items: center;
  height: 30px;
  flex: none;
  box-sizing: border-box;
  background: #f0f0f0;
  border-bottom: 1px solid #a0a0a0;
}

.tic {
  height: 24px;
  flex: none;
}

.arrow {
  width: 0;
  height: 0;
  flex: none;
  border-left: 3.500px solid transparent;
  border-right: 3.500px solid transparent;
  border-top: 4px solid #111;
}

.sep {
  width: 1px;
  height: 26px;
  flex: none;
  background: #a8a8a8;
}

.combo {
  height: 24px;
  flex: none;
  box-sizing: border-box;
  display: flex;
  align-items: center;
  background: #e1e1e1;
  border: 1px solid #adadad;
  padding-left: 3px;
  overflow: hidden;
}

.ctext {
  flex: 1;
  white-space: nowrap;
  overflow: hidden;
}

.chev {
  width: 5px;
  height: 5px;
  flex: none;
  margin: -2px 6px 0 6px;
  box-sizing: border-box;
  border-right: 1px solid #555;
  border-bottom: 1px solid #555;
  transform: rotate(45deg);
}

.inp {
  height: 24px;
  flex: none;
  box-sizing: border-box;
  display: flex;
  align-items: center;
  background: #fff;
  border: 1px solid #7a7a7a;
  padding-left: 4px;
  white-space: nowrap;
}

.inp2 {
  height: 21px;
}

.zero {
  font-weight: 700;
}

.ball {
  height: 24px;
  flex: none;
  box-sizing: border-box;
  display: flex;
  align-items: center;
  justify-content: center;
  border-radius: 50%;
  background: radial-gradient(circle at 40% 35%, #b4f05a, #1e8c14);
  border: 1px solid #156010;
  box-shadow: 0 0 0 1px #e6e6e6;
}

.ball b {
  font-size: 13px;
  color: #063806;
}

.linecombo b {
  display: block;
  width: 48px;
  height: 2px;
  background: #000;
  flex: none;
}

.linecombo .chev {
  margin-left: 10px;
}

.blackbox {
  height: 24px;
  flex: none;
  background: #000;
}

.greybox {
  height: 24px;
  flex: none;
  background: #bdbdbd;
}

.spin {
  width: 13px;
  height: 21px;
  flex: none;
  display: flex;
  flex-direction: column;
  box-sizing: border-box;
  border: 1px solid #7a7a7a;
  border-left: 0;
  background: #f4f4f4;
}

.spin i {
  flex: 1;
  display: flex;
  align-items: center;
  justify-content: center;
}

.spin i::before {
  content: "";
  border-left: 3px solid transparent;
  border-right: 3px solid transparent;
}

.spin i:first-child::before {
  border-bottom: 3px solid #444;
}

.spin i:last-child::before {
  border-top: 3px solid #444;
}

.body {
  flex: 1;
  display: flex;
  min-height: 0;
}

.left {
  width: 455px;
  flex: none;
  box-sizing: border-box;
  border-right: 1px solid #a0a0a0;
  display: flex;
  flex-direction: column;
}

.handle {
  height: 21px;
  flex: none;
  display: flex;
  align-items: center;
  padding-left: 6px;
}

.grip {
  width: 418px;
  height: 2px;
  flex: none;
  border-top: 1px solid #a8a8a8;
  border-bottom: 1px solid #a8a8a8;
}

.hbtn {
  font-size: 10px;
  margin-left: 6px;
  color: #222;
}

.hx {
  font-size: 13px;
  font-weight: 700;
  margin-left: 5px;
}

.ltools {
  height: 24px;
  flex: none;
  display: flex;
  align-items: center;
}

.lic {
  height: 22px;
  flex: none;
}

.dock {
  margin: 3px 0 2px 5px;
  width: 444px;
  flex: 1;
  min-height: 0;
  box-sizing: border-box;
  border: 1px solid #a0a0a0;
  display: flex;
  flex-direction: column;
}

.tabs {
  height: 23px;
  flex: none;
  display: flex;
  padding-left: 2px;
  align-items: flex-end;
  font-size: 10.5px;
}

.tab {
  box-sizing: border-box;
  display: flex;
  align-items: center;
  width: 64px;
}

.tab.off {
  height: 20px;
  padding-left: 7px;
  border: 1px solid #d9d9d9;
  border-bottom: 0;
}

.tab.on {
  height: 23px;
  padding-left: 9px;
  background: #fff;
}

.tabic {
  width: 15px;
  height: 15px;
  margin-right: 6px;
  flex: none;
}

.box {
  margin-left: 4px;
  width: 434px;
  flex: none;
  box-sizing: border-box;
  border: 1px solid #646464;
  background: #fff;
  display: flex;
  overflow: hidden;
}

.tree {
  height: 314px;
}

.table {
  height: 315px;
  margin-top: 6px;
}

.notes {
  height: 182px;
  flex-direction: column;
}

.tlist {
  flex: 1;
  min-width: 0;
  overflow: hidden;
}

.tnode {
  height: 18px;
  display: flex;
  align-items: center;
  padding-left: 42px;
  white-space: nowrap;
}

.nic {
  width: 15px;
  height: 16px;
  margin-right: 5px;
  flex: none;
}

.tnode.root {
  padding-left: 23px;
  background: #d9d9d9;
}

.vs {
  width: 16px;
  flex: none;
  display: flex;
  flex-direction: column;
  background: #f0f0f0;
}

.vs i,
.hs i {
  flex: none;
  display: flex;
  align-items: center;
  justify-content: center;
}

.vs i {
  height: 17px;
}

.vs i::before,
.hs i::before {
  content: "";
  width: 6px;
  height: 6px;
  box-sizing: border-box;
  border-right: 2px solid #606060;
  border-bottom: 2px solid #606060;
}

.vs .up::before {
  transform: translateY(2px) rotate(-135deg);
}

.vs .down {
  margin-top: auto;
}

.vs .down::before {
  transform: translateY(-1px) rotate(45deg);
}

.tthumb {
  height: 225px;
  background: #c4c4c4;
}

.lthumb {
  height: 167px;
  background: #c4c4c4;
}

.mthumb {
  height: 68px;
  margin-top: 463px;
  background: #cdcdcd;
}

.lhead,
.lrow {
  display: grid;
  grid-template-columns: 99px 34px 34px 35px 34px 34px;
  align-items: center;
}

.lhead {
  height: 23px;
}

.lhead span {
  height: 23px;
  line-height: 24px;
  box-sizing: border-box;
  padding-left: 6px;
  border-right: 1px solid #eee;
}

.lhead span:not(:first-child) {
  padding-left: 7px;
}

.lrow {
  height: 19px;
}

.lrow.hot {
  background: #f0f0f0;
}

.lname {
  height: 19px;
  display: flex;
  align-items: center;
  white-space: nowrap;
  padding-left: 5px;
  background: #f7f7f7;
  overflow: hidden;
}

.lrow .nic {
  margin-right: 2px;
}

.sw {
  width: 16px;
  height: 17px;
  margin-left: 1px;
}

.lt b {
  display: block;
  width: 16px;
  height: 3px;
  background: #000;
}

.lb {
  padding-left: 6px;
}

.la {
  width: 16px;
  height: 14px;
  margin-left: 1px;
}

.ls {
  width: 16px;
  height: 13px;
  margin-left: 1px;
}

.dtools {
  height: 35px;
  flex: none;
  display: flex;
  align-items: center;
  padding-left: 3px;
  gap: 7px;
  background: #f4f4f4;
  margin: 0 4px;
  box-sizing: border-box;
}

.dlamp {
  width: 24px;
  height: 24px;
}

.dbucket {
  width: 16px;
  height: 22px;
}

.nbody {
  flex: 1;
  display: flex;
}

.gutter {
  width: 16px;
  background: #f0f0f0;
}

.hs {
  height: 15px;
  flex: none;
  display: flex;
  background: #f0f0f0;
}

.hs i {
  width: 17px;
}

.hs .lf::before {
  transform: translateX(2px) rotate(135deg);
}

.hs .rt {
  margin-left: auto;
}

.hs .rt::before {
  transform: translateX(-1px) rotate(-45deg);
}

.nthumb {
  width: 80px;
  margin-left: 3px;
  background: #c8c8c8;
}

.right {
  flex: 1;
  min-width: 0;
  display: flex;
  flex-direction: column;
}

.work {
  flex: 1;
  min-height: 0;
  display: flex;
}

.vtool {
  width: 59px;
  flex: none;
  display: flex;
  box-sizing: border-box;
  border-right: 1px solid #a0a0a0;
}

.vcol {
  display: flex;
  flex-direction: column;
  padding-top: 1px;
}

.col1 {
  width: 28px;
  box-sizing: border-box;
  border-right: 1px solid #a0a0a0;
}

.col2 {
  flex: 1;
}

.vb {
  height: 28px;
  flex: none;
  position: relative;
  display: flex;
  align-items: center;
  justify-content: center;
  box-sizing: border-box;
  border-bottom: 1px solid #b4b4b4;
}

.vb svg {
  width: 22px;
  height: 22px;
}

.vb:last-child {
  border-bottom: 0;
}

.fly::after {
  content: "";
  position: absolute;
  right: 1px;
  bottom: 3px;
  border-top: 3px solid transparent;
  border-bottom: 3px solid transparent;
  border-left: 3px solid #000;
}

.va {
  position: absolute;
  left: 10px;
  top: 13px;
  font: 700 9px/11px "Liberation Sans", sans-serif;
}

.vabc {
  position: absolute;
  left: 4px;
  top: 6px;
  font: italic 700 18px/20px "Liberation Sans", sans-serif;
  color: #0a2c98;
}

.vb-b {
  position: absolute;
  left: 16px;
  top: 14px;
  font: 700 9px/11px "Liberation Sans", sans-serif;
}

.vb2 {
  flex: none;
  display: flex;
  align-items: center;
  justify-content: center;
  box-sizing: border-box;
}

.vb2.lined {
  border-bottom: 1px solid #b4b4b4;
}

.vb2 svg {
  width: 22px;
  height: 22px;
}

.view {
  flex: 1;
  min-width: 0;
  display: flex;
  flex-direction: column;
}

.viewrow {
  height: 890px;
  flex: none;
  display: flex;
}

.canvas {
  flex: 1;
  min-width: 0;
  position: relative;
  background: #fff;
}

.scene {
  display: block;
  width: 1390px;
  height: 890px;
}

.main-vs {
  width: 16px;
}

.main-hs {
  height: 16px;
}

.mhthumb {
  width: 112px;
  margin-left: 548px;
  background: #cdcdcd;
}

.status {
  position: absolute;
  left: 1024px;
  top: 77px;
  width: 241px;
  height: 273px;
  background: #efefef;
  box-shadow: 2px 3px 8px rgba(0, 0, 0, 0.35);
  display: flex;
  flex-direction: column;
}

.shead {
  height: 31px;
  flex: none;
  box-sizing: border-box;
  background: #fff;
  display: flex;
  align-items: center;
  padding-left: 8px;
  color: #808080;
}

.shead span {
  flex: 1;
}

.shead i {
  width: 19px;
  height: 19px;
  margin-right: 1px;
  background: #ececec;
}

.sbody {
  flex: 1;
  display: flex;
}

.slabels {
  width: 92px;
  flex: none;
  box-sizing: border-box;
  border-right: 2px solid #777;
  padding-left: 12px;
}

.sl {
  height: 20px;
  line-height: 21px;
}

.sl.g {
  margin-top: 1px;
}

.svals {
  flex: 1;
  padding-left: 10px;
}

.sv {
  height: 20px;
  box-sizing: border-box;
  background: #fff;
  border: 1px solid #7a7a7a;
  line-height: 17px;
  padding-left: 5px;
}

.sv.g {
  margin-top: 1px;
}

.sbar {
  height: 32px;
  flex: none;
  box-sizing: border-box;
  display: flex;
  background: #f0f0f0;
  border-top: 1px solid #a0a0a0;
}

.p1 {
  width: 200px;
  flex: none;
  margin-top: 6px;
  box-sizing: border-box;
  border-top: 1px solid #a0a0a0;
  padding-left: 2px;
}

.p2 {
  width: 1349px;
  flex: none;
  margin-top: 6px;
  box-sizing: border-box;
  border-top: 1px solid #a0a0a0;
  border-left: 1px solid #e0e0e0;
  border-right: 1px solid #e0e0e0;
  padding-left: 2px;
  letter-spacing: -0.13px;
}

.p3 {
  flex: 1;
}

.dslogo {
  width: 64px;
  height: 29px;
  margin-top: 2px;
  flex: none;
  position: relative;
  background: #e4e4e4;
  overflow: hidden;
}

.blob {
  position: absolute;
  left: 6px;
  top: 2px;
  width: 50px;
  height: 30px;
  border-radius: 50% 60% 45% 55%;
  background: #e2002c;
}

.d1,
.d2 {
  position: absolute;
  font-family: "Liberation Sans", sans-serif;
  font-style: italic;
  font-weight: 700;
}

.d1 {
  left: 12px;
  top: 5px;
  font-size: 10px;
  color: #fff;
}

.d2 {
  left: 22px;
  top: 15px;
  font-size: 11px;
  letter-spacing: 0.5px;
  color: #000;
}
</style>
